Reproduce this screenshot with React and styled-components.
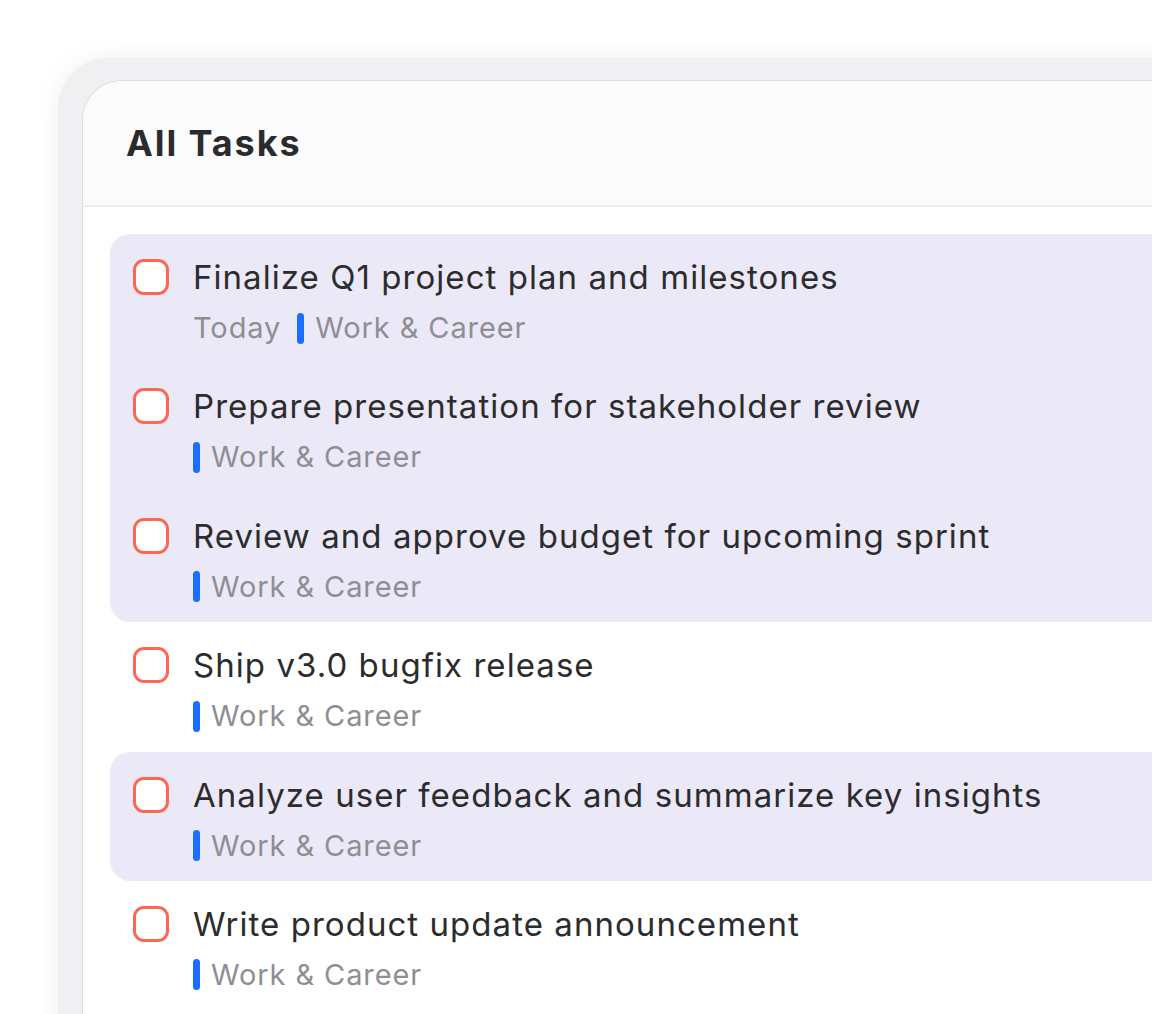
import styled, {createGlobalStyle} from "styled-components";

const GlobalStyle = createGlobalStyle`
  html, body {
    margin: 0;
    background: #ffffff;
    overflow: hidden;
  }
  body {
    font-family: Inter, "Noto Sans", "Liberation Sans", sans-serif;
    -webkit-font-smoothing: antialiased;
  }
`;

const tasks = [
    {title: "Finalize Q1 project plan and milestones", due: "Today", selected: true, top: true},
    {title: "Prepare presentation for stakeholder review", selected: true},
    {title: "Review and approve budget for upcoming sprint", selected: true, bottom: true},
    {title: "Ship v3.0 bugfix release"},
    {title: "Analyze user feedback and summarize key insights", selected: true, top: true, bottom: true},
    {title: "Write product update announcement"},
];

const App = () => {
    return (
        <>
            <GlobalStyle/>
            <Page>
                <Bezel>
                    <Window>
                        <Header>
                            <Title>All Tasks</Title>
                        </Header>
                        <TaskList>
                            {tasks.map((task) => (
                                <Row key={task.title} $selected={task.selected} $top={task.top} $bottom={task.bottom}>
                                    <Checkbox/>
                                    <Content>
                                        <TaskTitle>{task.title}</TaskTitle>
                                        <Meta>
                                            {task.due && <Due>{task.due}</Due>}
                                            <ListTag>
                                                <TagBar/>
                                                Work &amp; Career
                                            </ListTag>
                                        </Meta>
                                    </Content>
                                </Row>
                            ))}
                        </TaskList>
                    </Window>
                </Bezel>
            </Page>
        </>
    );
}

const Page = styled.div`
  width: 1152px;
  height: 1014px;
  padding: 58px 0 0 58px;
  box-sizing: border-box;
  overflow: hidden;
`

const Bezel = styled.div`
  width: 1200px;
  height: 1000px;
  box-sizing: border-box;
  padding: 22px 0 0 24px;
  background: #f0f0f2;
  border-radius: 50px 0 0 0;
  box-shadow: 0 0 28px rgba(0, 0, 0, 0.06);
`

const Window = styled.div`
  height: 100%;
  background: #ffffff;
  border: 1px solid #dcdce1;
  border-right: none;
  border-bottom: none;
  border-radius: 40px 0 0 0;
  overflow: hidden;
`

const Header = styled.div`
  height: 126px;
  display: flex;
  align-items: center;
  padding-left: 43px;
  background: #fbfbfc;
  border-bottom: 2px solid #ececee;
  box-sizing: border-box;
`

const Title = styled.h1`
  margin: 0;
  font-size: 36px;
  font-weight: 700;
  color: #2b2b2d;
  letter-spacing: 1.9px;
`

const TaskList = styled.div`
  display: flex;
  flex-direction: column;
  padding: 27px 0 0 27px;
`

const Row = styled.div`
  display: flex;
  align-items: flex-start;
  gap: 24px;
  height: 129.4px;
  box-sizing: border-box;
  padding: 25px 0 0 23px;
  background: ${p => p.$selected ? "#ebe9f7" : "transparent"};
  border-top-left-radius: ${p => p.$top ? "20px" : "0"};
  border-bottom-left-radius: ${p => p.$bottom ? "20px" : "0"};
`

const Checkbox = styled.div`
  width: 36px;
  height: 36px;
  flex: none;
  box-sizing: border-box;
  border: 3px solid #fe6651;
  border-radius: 11px;
  background: #ffffff;
`

const Content = styled.div`
  display: flex;
  flex-direction: column;
  gap: 15px;
`

const TaskTitle = styled.div`
  font-size: 33px;
  line-height: 38px;
  letter-spacing: 1.05px;
  color: #2c2c2e;
  margin-top: -1px;
  white-space: nowrap;
`

const Meta = styled.div`
  display: flex;
  align-items: center;
  gap: 16px;
  font-size: 29px;
  line-height: 34px;
  letter-spacing: 0.9px;
  color: #8e8e93;
`

const Due = styled.span``

const ListTag = styled.span`
  display: flex;
  align-items: center;
  gap: 11px;
`

const TagBar = styled.span`
  width: 7px;
  height: 31px;
  border-radius: 4px;
  background: #1a6dff;
`

export default App;
